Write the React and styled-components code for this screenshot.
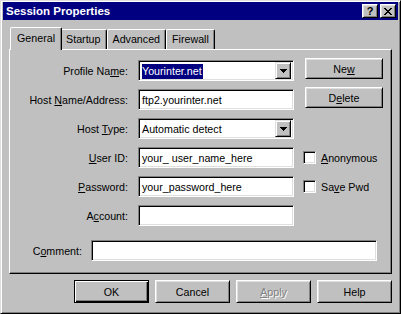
import React from "react";
import styled, { createGlobalStyle, css } from "styled-components";

const GlobalStyle = createGlobalStyle`
  html, body {
    margin: 0;
    padding: 0;
    background: #c0c0c0;
  }
  body {
    font-family: "Liberation Sans", Arial, sans-serif;
    font-size: 10.7px;
    color: #000;
  }
  * {
    box-sizing: border-box;
  }
`;

const raised = css`
  border: 1px solid;
  border-color: #fff #000 #000 #fff;
  box-shadow: inset 1px 1px #dfdfdf, inset -1px -1px #808080;
`;

const sunken = css`
  border: 1px solid;
  border-color: #808080 #fff #fff #808080;
  box-shadow: inset 1px 1px #000, inset -1px -1px #dfdfdf;
  background: #fff;
`;

const Window = styled.div`
  width: 401px;
  height: 314px;
  background: #c0c0c0;
  border: 1px solid;
  border-color: #dfdfdf #000 #000 #dfdfdf;
  box-shadow: inset 1px 1px #fff, inset -1px -1px #808080;
  padding: 1px 2px 2px 2px;
  display: flex;
  flex-direction: column;
`;

const TitleBar = styled.div`
  height: 18px;
  background: #000080;
  color: #fff;
  display: flex;
  align-items: center;
  padding: 0 2px 0 3px;
`;

const TitleText = styled.div`
  flex: 1;
  font-weight: bold;
  font-size: 11.5px;
`;

const CaptionButton = styled.div`
  width: 16px;
  height: 14px;
  margin-left: ${(p) => (p.$gap ? "2px" : "0")};
  background: #c0c0c0;
  ${raised}
  display: flex;
  align-items: center;
  justify-content: center;
  color: #000;
  font-weight: bold;
  font-size: 11px;
  line-height: 1;
`;

const Body = styled.div`
  padding: 7px 6px 0 6px;
  display: flex;
  flex-direction: column;
`;

const TabStrip = styled.div`
  height: 22px;
  display: flex;
  align-items: flex-end;
  padding-left: 3px;
`;

const Tab = styled.div`
  position: relative;
  height: ${(p) => (p.$active ? "23px" : "20px")};
  margin: ${(p) => (p.$active ? "0 -2px -1px -2px" : "0")};
  padding: ${(p) => (p.$active ? "2px 6px 0" : "0 5px 1px")};
  z-index: ${(p) => (p.$active ? 2 : 1)};
  background: #c0c0c0;
  border-top: 1px solid #fff;
  border-left: 1px solid #fff;
  border-right: 1px solid #000;
  border-radius: 2px 2px 0 0;
  box-shadow: inset -1px 0 #808080;
  display: flex;
  align-items: ${(p) => (p.$active ? "flex-start" : "center")};
  line-height: 17px;
  white-space: nowrap;
`;

const Panel = styled.div`
  height: 225px;
  border: 1px solid;
  border-color: #fff #000 #000 #fff;
  box-shadow: inset -1px -1px #808080;
  padding-top: 10px;
`;

const FormGrid = styled.div`
  display: grid;
  grid-template-columns: 128px 165px 1fr;
  grid-auto-rows: 21px;
  row-gap: 8px;
`;

const Label = styled.div`
  width: ${(p) => (p.$w ? `${p.$w}px` : "auto")};
  display: flex;
  align-items: center;
  justify-content: flex-end;
  padding-right: ${(p) => p.$pad || 10}px;
  white-space: nowrap;
`;

const Edit = styled.div`
  ${sunken}
  width: ${(p) => p.$w || 156}px;
  height: 21px;
  display: flex;
  align-items: center;
  padding: 0 3px;
  white-space: nowrap;
  overflow: hidden;
`;

const Combo = styled(Edit)`
  padding: 2px;
`;

const ComboText = styled.div`
  flex: 1;
  padding-left: 1px;
`;

const Selection = styled.span`
  background: #000080;
  color: #fff;
  padding: 1px 1px 2px 0;
`;

const DropButton = styled.div`
  width: 16px;
  height: 17px;
  background: #c0c0c0;
  border: 1px solid;
  border-color: #dfdfdf #000 #000 #dfdfdf;
  box-shadow: inset 1px 1px #fff, inset -1px -1px #808080;
  display: flex;
  align-items: center;
  justify-content: center;
`;

const SideButton = styled.div`
  width: 78px;
  height: 21px;
  margin: -2px 0 0 2px;
  background: #c0c0c0;
  ${raised}
  display: flex;
  align-items: center;
  justify-content: center;
`;

const CheckRow = styled.div`
  display: flex;
  align-items: center;
  gap: 5px;
`;

const CheckBox = styled.div`
  ${sunken}
  width: 13px;
  height: 13px;
`;

const CommentRow = styled.div`
  display: flex;
  margin-top: 14px;
  height: 21px;
`;

const ButtonBar = styled.div`
  display: flex;
  justify-content: flex-end;
  gap: 6px;
  margin-top: 6px;
`;

const PushButton = styled.div`
  width: 75px;
  height: 23px;
  background: #c0c0c0;
  display: flex;
  align-items: center;
  justify-content: center;
  ${(p) =>
    p.$default
      ? css`
          border: 1px solid #000;
          box-shadow: inset 1px 1px #fff, inset -1px -1px #000,
            inset -2px -2px #808080;
        `
      : raised}
  ${(p) =>
    p.$disabled &&
    css`
      color: #808080;
      text-shadow: 1px 1px #fff;
    `}
`;

const CloseGlyph = () => {
  const rows = [
    [0, 6],
    [1, 5],
    [2, 4],
    [3, 3],
    [2, 4],
    [1, 5],
    [0, 6],
  ];
  return (
    <svg width="8" height="7" viewBox="0 0 8 7" shapeRendering="crispEdges">
      {rows.map(([a, b], i) => (
        <g key={i}>
          <rect x={a} y={i} width="2" height="1" fill="#000" />
          <rect x={b} y={i} width="2" height="1" fill="#000" />
        </g>
      ))}
    </svg>
  );
};

const ArrowGlyph = () => (
  <svg width="7" height="4" viewBox="0 0 7 4" shapeRendering="crispEdges">
    <rect x="0" y="0" width="7" height="1" fill="#000" />
    <rect x="1" y="1" width="5" height="1" fill="#000" />
    <rect x="2" y="2" width="3" height="1" fill="#000" />
    <rect x="3" y="3" width="1" height="1" fill="#000" />
  </svg>
);

const tabs = ["General", "Startup", "Advanced", "Firewall"];

export default function App() {
  return (
    <>
      <GlobalStyle />
      <Window>
        <TitleBar>
          <TitleText>Session Properties</TitleText>
          <CaptionButton>?</CaptionButton>
          <CaptionButton $gap>
            <CloseGlyph />
          </CaptionButton>
        </TitleBar>
        <Body>
          <TabStrip>
            {tabs.map((t, i) => (
              <Tab key={t} $active={i === 0}>
                {t}
              </Tab>
            ))}
          </TabStrip>
          <Panel>
            <FormGrid>
              <Label>
                <span>
                  Profile Na<u>m</u>e:
                </span>
              </Label>
              <Combo>
                <ComboText>
                  <Selection>Yourinter.net</Selection>
                </ComboText>
                <DropButton>
                  <ArrowGlyph />
                </DropButton>
              </Combo>
              <SideButton>
                <span>
                  Ne<u>w</u>
                </span>
              </SideButton>

              <Label>
                <span>
                  Host <u>N</u>ame/Address:
                </span>
              </Label>
              <Edit>ftp2.yourinter.net</Edit>
              <SideButton>
                <span>
                  D<u>e</u>lete
                </span>
              </SideButton>

              <Label>
                <span>
                  Host <u>T</u>ype:
                </span>
              </Label>
              <Combo>
                <ComboText>Automatic detect</ComboText>
                <DropButton>
                  <ArrowGlyph />
                </DropButton>
              </Combo>
              <div />

              <Label>
                <span>
                  <u>U</u>ser ID:
                </span>
              </Label>
              <Edit>your_ user_name_here</Edit>
              <CheckRow>
                <CheckBox />
                <span>
                  <u>A</u>nonymous
                </span>
              </CheckRow>

              <Label>
                <span>
                  <u>P</u>assword:
                </span>
              </Label>
              <Edit>your_password_here</Edit>
              <CheckRow>
                <CheckBox />
                <span>
                  Sa<u>v</u>e Pwd
                </span>
              </CheckRow>

              <Label>
                <span>
                  A<u>c</u>count:
                </span>
              </Label>
              <Edit />
              <div />
            </FormGrid>
            <CommentRow>
              <Label $w={81} $pad={9}>
                <span>
                  C<u>o</u>mment:
                </span>
              </Label>
              <Edit $w={286} />
            </CommentRow>
          </Panel>
          <ButtonBar>
            <PushButton $default>OK</PushButton>
            <PushButton>Cancel</PushButton>
            <PushButton $disabled>
              <span>
                <u>A</u>pply
              </span>
            </PushButton>
            <PushButton>Help</PushButton>
          </ButtonBar>
        </Body>
      </Window>
    </>
  );
}
